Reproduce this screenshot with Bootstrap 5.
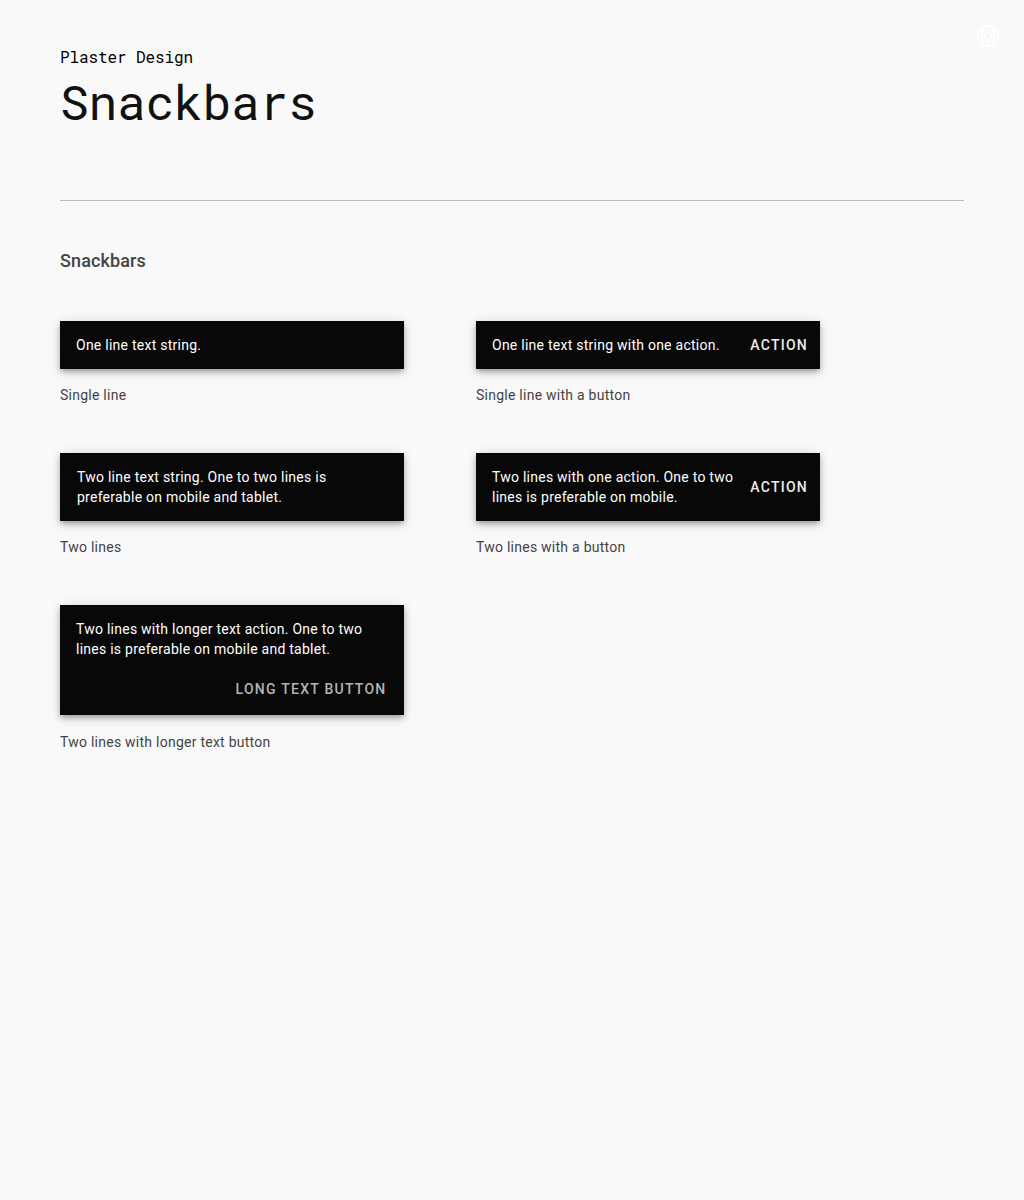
<!DOCTYPE html>
<html lang="en">
<head>
<meta charset="utf-8">
<meta name="viewport" content="width=device-width, initial-scale=1">
<title>Snackbars</title>
<link href="https://cdn.jsdelivr.net/npm/bootstrap@5.3.0/dist/css/bootstrap.min.css" rel="stylesheet">
<style>
body{background:#f9f9f9;font-family:Roboto,sans-serif;color:#444;min-height:1200px}
.page{padding:45px 60px 0}
.mono{font-family:"Roboto Mono","DejaVu Sans Mono",monospace}
.eyebrow{font-size:16px;line-height:24px;letter-spacing:-.1px;color:#000}
.title{font-size:48px;line-height:64px;letter-spacing:-.3px;color:#111;font-weight:400;margin-top:1px}
.brand-mark{position:absolute;top:24px;right:24px}
.rule{height:1px;background:#bdbdbd;margin-top:66px}
.section-title{font-size:18px;line-height:24px;font-weight:500;letter-spacing:.12px;margin:48px 0}
.demo-grid{display:grid;grid-template-columns:344px 344px;column-gap:72px;row-gap:48px}
.snack{background:#080808;color:#fff;padding:14px 16px;font-size:14px;line-height:20px;letter-spacing:.25px;box-shadow:0 3px 5px -1px rgba(0,0,0,.24),0 4px 8px rgba(0,0,0,.14),0 1px 12px rgba(0,0,0,.1)}
.snack-shift{padding-left:17px}
.snack-tall{padding-bottom:16px}
.snack-act{font-size:14px;line-height:20px;font-weight:500;letter-spacing:1.25px;color:#ececec;background:none;border:0;padding:0}
.snack-act.dim{color:#b4b4b4;margin-right:1.5px}
.caption{font-size:14px;line-height:20px;letter-spacing:.25px;margin-top:16px}
.snack-tall + .caption{margin-top:17px}
</style>
</head>
<body>
<svg class="brand-mark" width="24" height="24" viewBox="0 0 24 24" fill="none" stroke="#fff" stroke-width="1.6" aria-hidden="true"><circle cx="12" cy="12" r="10.4"/><path d="M5.8 18V5.5L12 18l6.2-12.5V18"/></svg>
<main class="page">
  <header>
    <div class="mono eyebrow">Plaster Design</div>
    <h1 class="mono title mb-0">Snackbars</h1>
  </header>
  <div class="rule"></div>
  <h2 class="section-title">Snackbars</h2>
  <div class="demo-grid">
    <section>
      <div class="snack">One line text string.</div>
      <div class="caption">Single line</div>
    </section>
    <section>
      <div class="snack d-flex justify-content-between align-items-center pe-2"><span>One line text string with one action.</span><button class="snack-act me-1">ACTION</button></div>
      <div class="caption">Single line with a button</div>
    </section>
    <section>
      <div class="snack snack-shift">Two line text string. One to two lines is<br>preferable on mobile and tablet.</div>
      <div class="caption">Two lines</div>
    </section>
    <section>
      <div class="snack d-flex justify-content-between align-items-center pe-2"><span>Two lines with one action. One to two<br>lines is preferable on mobile.</span><button class="snack-act me-1">ACTION</button></div>
      <div class="caption">Two lines with a button</div>
    </section>
    <section>
      <div class="snack snack-tall">Two lines with longer text action. One to two<br>lines is preferable on mobile and tablet.
        <div class="d-flex justify-content-end mt-3 pt-1"><button class="snack-act dim">LONG TEXT BUTTON</button></div>
      </div>
      <div class="caption">Two lines with longer text button</div>
    </section>
  </div>
</main>
<script src="https://cdn.jsdelivr.net/npm/bootstrap@5.3.0/dist/js/bootstrap.bundle.min.js"></script>
</body>
</html>
